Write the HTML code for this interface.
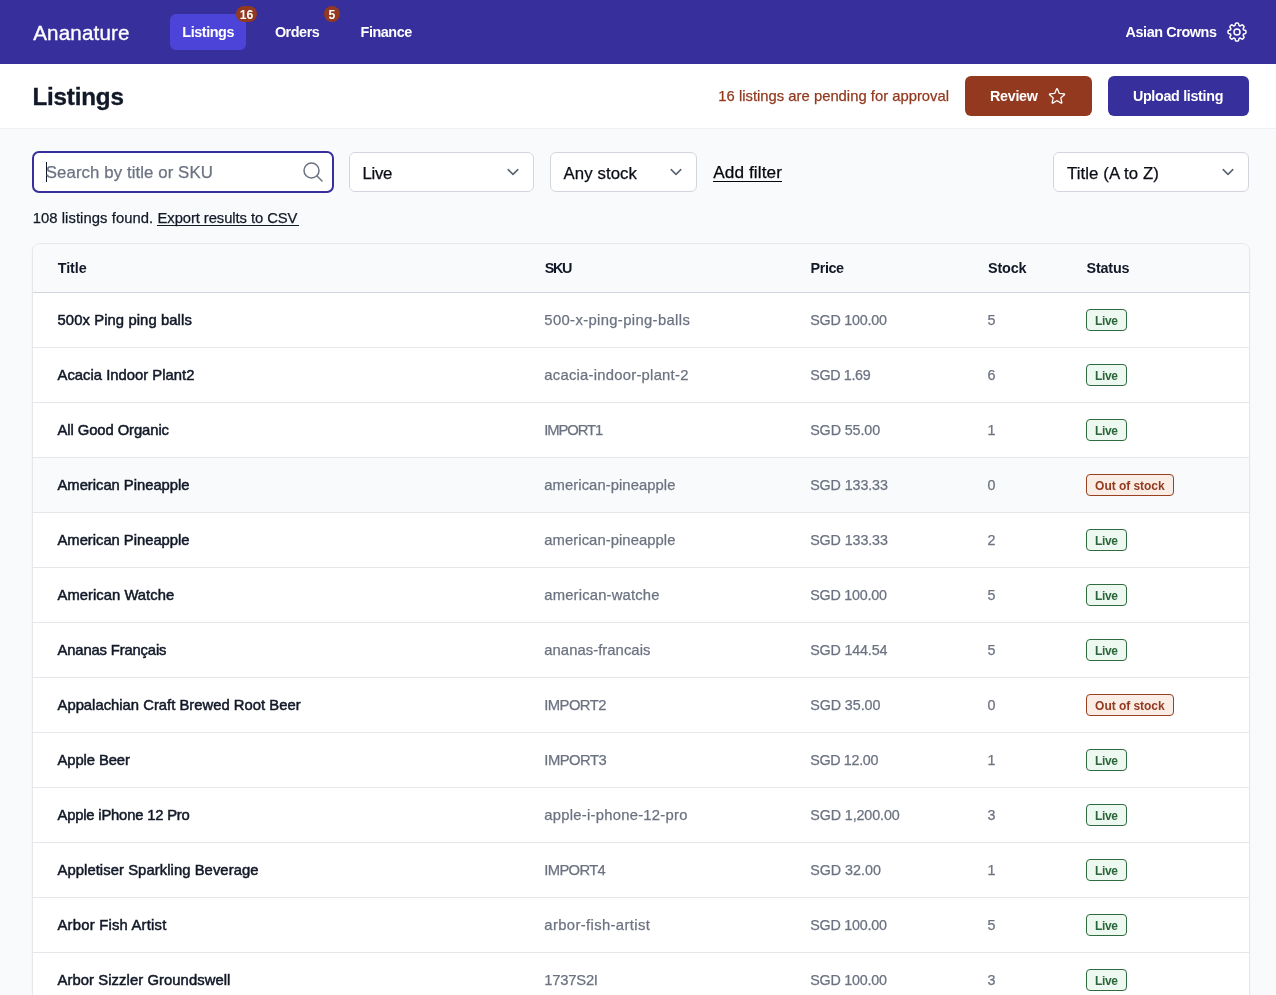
<!DOCTYPE html>
<html lang="en">
<head>
<meta charset="utf-8">
<title>Listings · Ananature</title>
<style>
*{box-sizing:border-box}
html,body{margin:0;padding:0}
body{width:1276px;height:995px;overflow:hidden;position:relative;background:#f9fafb;
  font-family:"Liberation Sans",sans-serif;color:#111827;will-change:transform}
.t{position:absolute;white-space:pre;margin:0;display:block}
a.t{text-decoration:none}
.abs{position:absolute}
/* top navigation */
.nav{position:absolute;left:0;top:0;width:1276px;height:64px;background:#372f9c}
.tab-active{position:absolute;left:170px;top:14px;width:76px;height:36px;border-radius:6px;background:#4c44d9}
.pill{position:absolute;top:6px;height:16px;border-radius:8px;background:#92391f}
/* sub header */
.sub{position:absolute;left:0;top:64px;width:1276px;height:65px;background:#fff;border-bottom:1px solid #eef0f3}
.btn{position:absolute;top:76px;height:40px;border-radius:6px}
.btn.review{left:965px;width:127px;background:#92391f}
.btn.upload{left:1108px;width:141px;background:#372f9c}
/* filters */
.search{position:absolute;left:32px;top:151px;width:302px;height:42px;border:2px solid #372f9c;border-radius:7px;background:#fff}
.caret{position:absolute;left:46px;top:162px;width:1px;height:20px;background:#111827}
.select{position:absolute;top:152px;height:40px;border:1px solid #d2d6dc;border-radius:6px;background:#fff}
.uline{position:absolute;height:1px;background:#111827}
/* table */
.table{position:absolute;left:32px;top:243px;width:1218px;height:780px;border:1px solid #e5e7eb;border-radius:8px;background:#fff;overflow:hidden;box-shadow:0 1px 2px rgba(0,0,0,.05)}
.thead{position:absolute;left:0;top:0;width:100%;height:49px;background:#f9fafb;border-bottom:1px solid #d2d6dc}
.row{position:absolute;left:33px;width:1216px;height:55px;border-bottom:1px solid #e5e7eb;background:#fff}
.row.hov{background:#f9fafb}
.badge{position:absolute;height:22px;border-radius:4px;border:1px solid;box-sizing:content-box;height:20px}
.badge.live{border-color:#2f6b3e;background:#edf8f0}
.badge.oos{border-color:#98401f;background:#f9ede5}
svg{position:absolute;overflow:visible}

</style>
</head>
<body>
<header class="nav">
</header>
<a class="t" style="left:33.20px;top:17.00px;line-height:31px;font-size:20.6px;font-weight:400;color:#fff;letter-spacing:0.169px;-webkit-text-stroke:0.35px #fff;">Ananature</a>
<nav>
  <div class="tab-active"></div>
  <a class="t" style="left:182.30px;top:21.01px;line-height:22px;font-size:14.4px;font-weight:700;color:#fff;letter-spacing:-0.439px;">Listings</a>
  <a class="t" style="left:274.90px;top:21.01px;line-height:22px;font-size:14.4px;font-weight:700;color:#fff;letter-spacing:-0.461px;">Orders</a>
  <a class="t" style="left:360.60px;top:21.01px;line-height:22px;font-size:14.4px;font-weight:700;color:#fff;letter-spacing:-0.465px;">Finance</a>
  <span class="pill" style="left:236px;width:21px"></span><span class="t" style="left:239.80px;top:6.01px;line-height:18px;font-size:12.2px;font-weight:700;color:#fff;letter-spacing:0.037px;">16</span>
  <span class="pill" style="left:323.8px;width:16px"></span><span class="t" style="left:328.40px;top:6.01px;line-height:18px;font-size:12.2px;font-weight:700;color:#fff;letter-spacing:0.000px;">5</span>
</nav>
<span class="t" style="left:1125.50px;top:21.01px;line-height:22px;font-size:14.4px;font-weight:700;color:#fff;letter-spacing:-0.406px;">Asian Crowns</span>
<svg style="left:1225px;top:20px" width="24" height="24" viewBox="0 0 24 24" fill="none" stroke="#fff" stroke-width="1.5" stroke-linecap="round" stroke-linejoin="round">
  <path d="M10.343 3.94c.09-.542.56-.94 1.11-.94h1.093c.55 0 1.02.398 1.11.94l.149.894c.07.424.384.764.78.93.398.164.855.142 1.205-.108l.737-.527a1.125 1.125 0 011.45.12l.773.774c.39.389.44 1.002.12 1.45l-.527.737c-.25.35-.272.806-.107 1.204.165.397.505.71.93.78l.893.15c.543.09.94.56.94 1.109v1.094c0 .55-.397 1.02-.94 1.11l-.893.149c-.425.07-.765.383-.93.78-.165.398-.143.854.107 1.204l.527.738c.32.447.269 1.06-.12 1.45l-.774.773a1.125 1.125 0 01-1.449.12l-.738-.527c-.35-.25-.806-.272-1.203-.107-.397.165-.71.505-.781.929l-.149.894c-.09.542-.56.94-1.11.94h-1.094c-.55 0-1.019-.398-1.11-.94l-.148-.894c-.071-.424-.384-.764-.781-.93-.398-.164-.854-.142-1.204.108l-.738.527c-.447.32-1.06.269-1.45-.12l-.773-.774a1.125 1.125 0 01-.12-1.45l.527-.737c.25-.35.273-.806.108-1.204-.165-.397-.505-.71-.93-.78l-.894-.15c-.542-.09-.94-.56-.94-1.109v-1.094c0-.55.398-1.02.94-1.11l.894-.149c.424-.07.765-.383.93-.78.165-.398.143-.854-.107-1.204l-.527-.738a1.125 1.125 0 01.12-1.45l.773-.773a1.125 1.125 0 011.45-.12l.737.527c.35.25.807.272 1.204.107.397-.165.71-.505.78-.929l.15-.894z"/>
  <path d="M15 12a3 3 0 11-6 0 3 3 0 016 0z"/>
</svg>

<div class="sub"></div>
<h1 class="t" style="left:32.40px;top:79.01px;line-height:36px;font-size:24.2px;font-weight:700;color:#111827;letter-spacing:-0.183px;-webkit-text-stroke:0.35px #111827;">Listings</h1>
<span class="t" style="left:718.30px;top:85.01px;line-height:22px;font-size:14.8px;font-weight:400;color:#92391f;letter-spacing:0.012px;-webkit-text-stroke:0.25px #92391f;">16 listings are pending for approval</span>
<div class="btn review"></div>
<span class="t" style="left:990.10px;top:86.00px;line-height:21px;font-size:14.3px;font-weight:700;color:#fff;letter-spacing:-0.306px;">Review</span>
<svg style="left:1047px;top:86px" width="20" height="20" viewBox="0 0 24 24" fill="none" stroke="#fff" stroke-width="1.5" stroke-linecap="round" stroke-linejoin="round">
  <path d="M11.48 3.499a.562.562 0 011.04 0l2.125 5.111a.563.563 0 00.475.345l5.518.442c.499.04.701.663.321.988l-4.204 3.602a.563.563 0 00-.182.557l1.285 5.385a.562.562 0 01-.84.61l-4.725-2.885a.563.563 0 00-.586 0L6.982 20.54a.562.562 0 01-.84-.61l1.285-5.386a.562.562 0 00-.182-.557l-4.204-3.602a.563.563 0 01.321-.988l5.518-.442a.563.563 0 00.475-.345L11.48 3.5z"/>
</svg>
<div class="btn upload"></div>
<span class="t" style="left:1132.90px;top:86.00px;line-height:21px;font-size:14.3px;font-weight:700;color:#fff;letter-spacing:-0.309px;">Upload listing</span>

<div class="search"></div>
<div class="caret"></div>
<span class="t" style="left:45.80px;top:160.01px;line-height:25px;font-size:16.8px;font-weight:400;color:#6b7280;letter-spacing:0.091px;-webkit-text-stroke:0.25px #6b7280;">Search by title or SKU</span>
<svg style="left:300.5px;top:160px" width="24" height="24" viewBox="0 0 24 24" fill="none" stroke="#6b7280" stroke-width="1.5" stroke-linecap="round" stroke-linejoin="round">
  <path d="M21 21l-5.197-5.197m0 0A7.5 7.5 0 105.196 5.196a7.5 7.5 0 0010.607 10.607z"/>
</svg>
<div class="select" style="left:349px;width:185px"></div>
<span class="t" style="left:362.40px;top:161.01px;line-height:25px;font-size:16.8px;font-weight:400;color:#0a0d15;letter-spacing:-0.266px;-webkit-text-stroke:0.25px #0a0d15;">Live</span>
<svg style="left:501.1px;top:160.35px" width="24" height="24" viewBox="0 0 20 20" fill="none" stroke="#5b6473" stroke-width="1.3" stroke-linecap="round" stroke-linejoin="round"><path d="M6 8l4 4 4-4"/></svg>
<div class="select" style="left:550px;width:147px"></div>
<span class="t" style="left:563.40px;top:161.01px;line-height:25px;font-size:16.8px;font-weight:400;color:#0a0d15;letter-spacing:0.106px;-webkit-text-stroke:0.25px #0a0d15;">Any stock</span>
<svg style="left:664.0px;top:160.35px" width="24" height="24" viewBox="0 0 20 20" fill="none" stroke="#5b6473" stroke-width="1.3" stroke-linecap="round" stroke-linejoin="round"><path d="M6 8l4 4 4-4"/></svg>
<a class="t" style="left:713.20px;top:159.01px;line-height:26px;font-size:17.2px;font-weight:400;color:#05070d;letter-spacing:0.097px;-webkit-text-stroke:0.25px #05070d;">Add filter</a>
<div class="uline" style="left:713px;top:181px;width:69px;height:1px;background:#05070d"></div>
<div class="select" style="left:1053px;width:196px"></div>
<span class="t" style="left:1067.00px;top:161.01px;line-height:25px;font-size:16.8px;font-weight:400;color:#0a0d15;letter-spacing:0.080px;-webkit-text-stroke:0.25px #0a0d15;">Title (A to Z)</span>
<svg style="left:1216.1px;top:160.35px" width="24" height="24" viewBox="0 0 20 20" fill="none" stroke="#5b6473" stroke-width="1.3" stroke-linecap="round" stroke-linejoin="round"><path d="M6 8l4 4 4-4"/></svg>

<span class="t" style="left:32.70px;top:207.01px;line-height:22px;font-size:14.8px;font-weight:400;color:#111827;letter-spacing:0.068px;-webkit-text-stroke:0.25px #111827;">108 listings found.</span>
<a class="t" style="left:157.52px;top:207.01px;line-height:22px;font-size:14.8px;font-weight:400;color:#111827;letter-spacing:-0.077px;-webkit-text-stroke:0.25px #111827;">Export results to CSV</a>
<div class="uline" style="left:157px;top:225px;width:141.5px"></div>

<div class="table"><div class="thead"></div></div>
<span class="t" style="left:57.70px;top:257.01px;line-height:22px;font-size:14.4px;font-weight:700;color:#111827;letter-spacing:-0.057px;">Title</span><span class="t" style="left:544.70px;top:257.01px;line-height:22px;font-size:14.4px;font-weight:700;color:#111827;letter-spacing:-1.395px;">SKU</span><span class="t" style="left:810.60px;top:257.01px;line-height:22px;font-size:14.4px;font-weight:700;color:#111827;letter-spacing:-0.430px;">Price</span><span class="t" style="left:988.00px;top:257.01px;line-height:22px;font-size:14.4px;font-weight:700;color:#111827;letter-spacing:-0.176px;">Stock</span><span class="t" style="left:1086.50px;top:257.01px;line-height:22px;font-size:14.4px;font-weight:700;color:#111827;letter-spacing:-0.197px;">Status</span>
<div class="row" style="top:293px"></div><span class="t" style="left:57.50px;top:309.01px;line-height:22px;font-size:14.8px;font-weight:400;color:#111827;letter-spacing:0.097px;-webkit-text-stroke:0.5px #111827;">500x Ping ping balls</span><span class="t" style="left:544.30px;top:309.01px;line-height:22px;font-size:14.8px;font-weight:400;color:#6b7280;letter-spacing:0.366px;-webkit-text-stroke:0.25px #6b7280;">500-x-ping-ping-balls</span><span class="t" style="left:810.20px;top:310.00px;line-height:21px;font-size:14.3px;font-weight:400;color:#6b7280;letter-spacing:-0.210px;-webkit-text-stroke:0.25px #6b7280;">SGD 100.00</span><span class="t" style="left:987.40px;top:310.00px;line-height:21px;font-size:14.3px;font-weight:400;color:#6b7280;letter-spacing:0.000px;-webkit-text-stroke:0.25px #6b7280;">5</span><span class="badge live" style="left:1086px;top:309px;width:39px"></span><span class="t" style="left:1095.10px;top:312.01px;line-height:18px;font-size:12px;font-weight:700;color:#2a6639;letter-spacing:-0.405px;">Live</span>
<div class="row" style="top:348px"></div><span class="t" style="left:57.50px;top:364.01px;line-height:22px;font-size:14.8px;font-weight:400;color:#111827;letter-spacing:0.019px;-webkit-text-stroke:0.5px #111827;">Acacia Indoor Plant2</span><span class="t" style="left:544.30px;top:364.01px;line-height:22px;font-size:14.8px;font-weight:400;color:#6b7280;letter-spacing:0.254px;-webkit-text-stroke:0.25px #6b7280;">acacia-indoor-plant-2</span><span class="t" style="left:810.20px;top:365.00px;line-height:21px;font-size:14.3px;font-weight:400;color:#6b7280;letter-spacing:-0.340px;-webkit-text-stroke:0.25px #6b7280;">SGD 1.69</span><span class="t" style="left:987.40px;top:365.00px;line-height:21px;font-size:14.3px;font-weight:400;color:#6b7280;letter-spacing:0.000px;-webkit-text-stroke:0.25px #6b7280;">6</span><span class="badge live" style="left:1086px;top:364px;width:39px"></span><span class="t" style="left:1095.10px;top:367.01px;line-height:18px;font-size:12px;font-weight:700;color:#2a6639;letter-spacing:-0.405px;">Live</span>
<div class="row" style="top:403px"></div><span class="t" style="left:57.50px;top:419.01px;line-height:22px;font-size:14.8px;font-weight:400;color:#111827;letter-spacing:-0.079px;-webkit-text-stroke:0.5px #111827;">All Good Organic</span><span class="t" style="left:544.30px;top:419.01px;line-height:22px;font-size:14.8px;font-weight:400;color:#6b7280;letter-spacing:-1.086px;-webkit-text-stroke:0.25px #6b7280;">IMPORT1</span><span class="t" style="left:810.20px;top:420.00px;line-height:21px;font-size:14.3px;font-weight:400;color:#6b7280;letter-spacing:-0.104px;-webkit-text-stroke:0.25px #6b7280;">SGD 55.00</span><span class="t" style="left:987.40px;top:420.00px;line-height:21px;font-size:14.3px;font-weight:400;color:#6b7280;letter-spacing:0.000px;-webkit-text-stroke:0.25px #6b7280;">1</span><span class="badge live" style="left:1086px;top:419px;width:39px"></span><span class="t" style="left:1095.10px;top:422.01px;line-height:18px;font-size:12px;font-weight:700;color:#2a6639;letter-spacing:-0.405px;">Live</span>
<div class="row hov" style="top:458px"></div><span class="t" style="left:57.50px;top:474.01px;line-height:22px;font-size:14.8px;font-weight:400;color:#111827;letter-spacing:-0.026px;-webkit-text-stroke:0.5px #111827;">American Pineapple</span><span class="t" style="left:544.30px;top:474.01px;line-height:22px;font-size:14.8px;font-weight:400;color:#6b7280;letter-spacing:0.067px;-webkit-text-stroke:0.25px #6b7280;">american-pineapple</span><span class="t" style="left:810.20px;top:475.00px;line-height:21px;font-size:14.3px;font-weight:400;color:#6b7280;letter-spacing:-0.110px;-webkit-text-stroke:0.25px #6b7280;">SGD 133.33</span><span class="t" style="left:987.40px;top:475.00px;line-height:21px;font-size:14.3px;font-weight:400;color:#6b7280;letter-spacing:0.000px;-webkit-text-stroke:0.25px #6b7280;">0</span><span class="badge oos" style="left:1086px;top:474px;width:86px"></span><span class="t" style="left:1095.10px;top:477.01px;line-height:18px;font-size:12px;font-weight:700;color:#92391f;letter-spacing:-0.038px;">Out of stock</span>
<div class="row" style="top:513px"></div><span class="t" style="left:57.50px;top:529.01px;line-height:22px;font-size:14.8px;font-weight:400;color:#111827;letter-spacing:-0.026px;-webkit-text-stroke:0.5px #111827;">American Pineapple</span><span class="t" style="left:544.30px;top:529.01px;line-height:22px;font-size:14.8px;font-weight:400;color:#6b7280;letter-spacing:0.067px;-webkit-text-stroke:0.25px #6b7280;">american-pineapple</span><span class="t" style="left:810.20px;top:530.00px;line-height:21px;font-size:14.3px;font-weight:400;color:#6b7280;letter-spacing:-0.110px;-webkit-text-stroke:0.25px #6b7280;">SGD 133.33</span><span class="t" style="left:987.40px;top:530.00px;line-height:21px;font-size:14.3px;font-weight:400;color:#6b7280;letter-spacing:0.000px;-webkit-text-stroke:0.25px #6b7280;">2</span><span class="badge live" style="left:1086px;top:529px;width:39px"></span><span class="t" style="left:1095.10px;top:532.01px;line-height:18px;font-size:12px;font-weight:700;color:#2a6639;letter-spacing:-0.405px;">Live</span>
<div class="row" style="top:568px"></div><span class="t" style="left:57.50px;top:584.01px;line-height:22px;font-size:14.8px;font-weight:400;color:#111827;letter-spacing:0.033px;-webkit-text-stroke:0.5px #111827;">American Watche</span><span class="t" style="left:544.30px;top:584.01px;line-height:22px;font-size:14.8px;font-weight:400;color:#6b7280;letter-spacing:0.173px;-webkit-text-stroke:0.25px #6b7280;">american-watche</span><span class="t" style="left:810.20px;top:585.00px;line-height:21px;font-size:14.3px;font-weight:400;color:#6b7280;letter-spacing:-0.210px;-webkit-text-stroke:0.25px #6b7280;">SGD 100.00</span><span class="t" style="left:987.40px;top:585.00px;line-height:21px;font-size:14.3px;font-weight:400;color:#6b7280;letter-spacing:0.000px;-webkit-text-stroke:0.25px #6b7280;">5</span><span class="badge live" style="left:1086px;top:584px;width:39px"></span><span class="t" style="left:1095.10px;top:587.01px;line-height:18px;font-size:12px;font-weight:700;color:#2a6639;letter-spacing:-0.405px;">Live</span>
<div class="row" style="top:623px"></div><span class="t" style="left:57.50px;top:639.01px;line-height:22px;font-size:14.8px;font-weight:400;color:#111827;letter-spacing:-0.146px;-webkit-text-stroke:0.5px #111827;">Ananas Français</span><span class="t" style="left:544.30px;top:639.01px;line-height:22px;font-size:14.8px;font-weight:400;color:#6b7280;letter-spacing:0.057px;-webkit-text-stroke:0.25px #6b7280;">ananas-francais</span><span class="t" style="left:810.20px;top:640.00px;line-height:21px;font-size:14.3px;font-weight:400;color:#6b7280;letter-spacing:-0.165px;-webkit-text-stroke:0.25px #6b7280;">SGD 144.54</span><span class="t" style="left:987.40px;top:640.00px;line-height:21px;font-size:14.3px;font-weight:400;color:#6b7280;letter-spacing:0.000px;-webkit-text-stroke:0.25px #6b7280;">5</span><span class="badge live" style="left:1086px;top:639px;width:39px"></span><span class="t" style="left:1095.10px;top:642.01px;line-height:18px;font-size:12px;font-weight:700;color:#2a6639;letter-spacing:-0.405px;">Live</span>
<div class="row" style="top:678px"></div><span class="t" style="left:57.50px;top:694.01px;line-height:22px;font-size:14.8px;font-weight:400;color:#111827;letter-spacing:0.014px;-webkit-text-stroke:0.5px #111827;">Appalachian Craft Brewed Root Beer</span><span class="t" style="left:544.30px;top:694.01px;line-height:22px;font-size:14.8px;font-weight:400;color:#6b7280;letter-spacing:-0.569px;-webkit-text-stroke:0.25px #6b7280;">IMPORT2</span><span class="t" style="left:810.20px;top:695.00px;line-height:21px;font-size:14.3px;font-weight:400;color:#6b7280;letter-spacing:-0.067px;-webkit-text-stroke:0.25px #6b7280;">SGD 35.00</span><span class="t" style="left:987.40px;top:695.00px;line-height:21px;font-size:14.3px;font-weight:400;color:#6b7280;letter-spacing:0.000px;-webkit-text-stroke:0.25px #6b7280;">0</span><span class="badge oos" style="left:1086px;top:694px;width:86px"></span><span class="t" style="left:1095.10px;top:697.01px;line-height:18px;font-size:12px;font-weight:700;color:#92391f;letter-spacing:-0.038px;">Out of stock</span>
<div class="row" style="top:733px"></div><span class="t" style="left:57.50px;top:749.01px;line-height:22px;font-size:14.8px;font-weight:400;color:#111827;letter-spacing:-0.091px;-webkit-text-stroke:0.5px #111827;">Apple Beer</span><span class="t" style="left:544.30px;top:749.01px;line-height:22px;font-size:14.8px;font-weight:400;color:#6b7280;letter-spacing:-0.503px;-webkit-text-stroke:0.25px #6b7280;">IMPORT3</span><span class="t" style="left:810.20px;top:750.00px;line-height:21px;font-size:14.3px;font-weight:400;color:#6b7280;letter-spacing:-0.317px;-webkit-text-stroke:0.25px #6b7280;">SGD 12.00</span><span class="t" style="left:987.40px;top:750.00px;line-height:21px;font-size:14.3px;font-weight:400;color:#6b7280;letter-spacing:0.000px;-webkit-text-stroke:0.25px #6b7280;">1</span><span class="badge live" style="left:1086px;top:749px;width:39px"></span><span class="t" style="left:1095.10px;top:752.01px;line-height:18px;font-size:12px;font-weight:700;color:#2a6639;letter-spacing:-0.405px;">Live</span>
<div class="row" style="top:788px"></div><span class="t" style="left:57.50px;top:804.01px;line-height:22px;font-size:14.8px;font-weight:400;color:#111827;letter-spacing:-0.192px;-webkit-text-stroke:0.5px #111827;">Apple iPhone 12 Pro</span><span class="t" style="left:544.30px;top:804.01px;line-height:22px;font-size:14.8px;font-weight:400;color:#6b7280;letter-spacing:0.258px;-webkit-text-stroke:0.25px #6b7280;">apple-i-phone-12-pro</span><span class="t" style="left:810.20px;top:805.00px;line-height:21px;font-size:14.3px;font-weight:400;color:#6b7280;letter-spacing:-0.092px;-webkit-text-stroke:0.25px #6b7280;">SGD 1,200.00</span><span class="t" style="left:987.40px;top:805.00px;line-height:21px;font-size:14.3px;font-weight:400;color:#6b7280;letter-spacing:0.000px;-webkit-text-stroke:0.25px #6b7280;">3</span><span class="badge live" style="left:1086px;top:804px;width:39px"></span><span class="t" style="left:1095.10px;top:807.01px;line-height:18px;font-size:12px;font-weight:700;color:#2a6639;letter-spacing:-0.405px;">Live</span>
<div class="row" style="top:843px"></div><span class="t" style="left:57.50px;top:859.01px;line-height:22px;font-size:14.8px;font-weight:400;color:#111827;letter-spacing:0.069px;-webkit-text-stroke:0.5px #111827;">Appletiser Sparkling Beverage</span><span class="t" style="left:544.30px;top:859.01px;line-height:22px;font-size:14.8px;font-weight:400;color:#6b7280;letter-spacing:-0.669px;-webkit-text-stroke:0.25px #6b7280;">IMPORT4</span><span class="t" style="left:810.20px;top:860.00px;line-height:21px;font-size:14.3px;font-weight:400;color:#6b7280;letter-spacing:-0.004px;-webkit-text-stroke:0.25px #6b7280;">SGD 32.00</span><span class="t" style="left:987.40px;top:860.00px;line-height:21px;font-size:14.3px;font-weight:400;color:#6b7280;letter-spacing:0.000px;-webkit-text-stroke:0.25px #6b7280;">1</span><span class="badge live" style="left:1086px;top:859px;width:39px"></span><span class="t" style="left:1095.10px;top:862.01px;line-height:18px;font-size:12px;font-weight:700;color:#2a6639;letter-spacing:-0.405px;">Live</span>
<div class="row" style="top:898px"></div><span class="t" style="left:57.50px;top:914.01px;line-height:22px;font-size:14.8px;font-weight:400;color:#111827;letter-spacing:0.222px;-webkit-text-stroke:0.5px #111827;">Arbor Fish Artist</span><span class="t" style="left:544.30px;top:914.01px;line-height:22px;font-size:14.8px;font-weight:400;color:#6b7280;letter-spacing:0.375px;-webkit-text-stroke:0.25px #6b7280;">arbor-fish-artist</span><span class="t" style="left:810.20px;top:915.00px;line-height:21px;font-size:14.3px;font-weight:400;color:#6b7280;letter-spacing:-0.210px;-webkit-text-stroke:0.25px #6b7280;">SGD 100.00</span><span class="t" style="left:987.40px;top:915.00px;line-height:21px;font-size:14.3px;font-weight:400;color:#6b7280;letter-spacing:0.000px;-webkit-text-stroke:0.25px #6b7280;">5</span><span class="badge live" style="left:1086px;top:914px;width:39px"></span><span class="t" style="left:1095.10px;top:917.01px;line-height:18px;font-size:12px;font-weight:700;color:#2a6639;letter-spacing:-0.405px;">Live</span>
<div class="row" style="top:953px"></div><span class="t" style="left:57.50px;top:969.01px;line-height:22px;font-size:14.8px;font-weight:400;color:#111827;letter-spacing:0.077px;-webkit-text-stroke:0.5px #111827;">Arbor Sizzler Groundswell</span><span class="t" style="left:544.30px;top:969.01px;line-height:22px;font-size:14.8px;font-weight:400;color:#6b7280;letter-spacing:-0.240px;-webkit-text-stroke:0.25px #6b7280;">1737S2I</span><span class="t" style="left:810.20px;top:970.00px;line-height:21px;font-size:14.3px;font-weight:400;color:#6b7280;letter-spacing:-0.210px;-webkit-text-stroke:0.25px #6b7280;">SGD 100.00</span><span class="t" style="left:987.40px;top:970.00px;line-height:21px;font-size:14.3px;font-weight:400;color:#6b7280;letter-spacing:0.000px;-webkit-text-stroke:0.25px #6b7280;">3</span><span class="badge live" style="left:1086px;top:969px;width:39px"></span><span class="t" style="left:1095.10px;top:972.01px;line-height:18px;font-size:12px;font-weight:700;color:#2a6639;letter-spacing:-0.405px;">Live</span>

</body>
</html>
